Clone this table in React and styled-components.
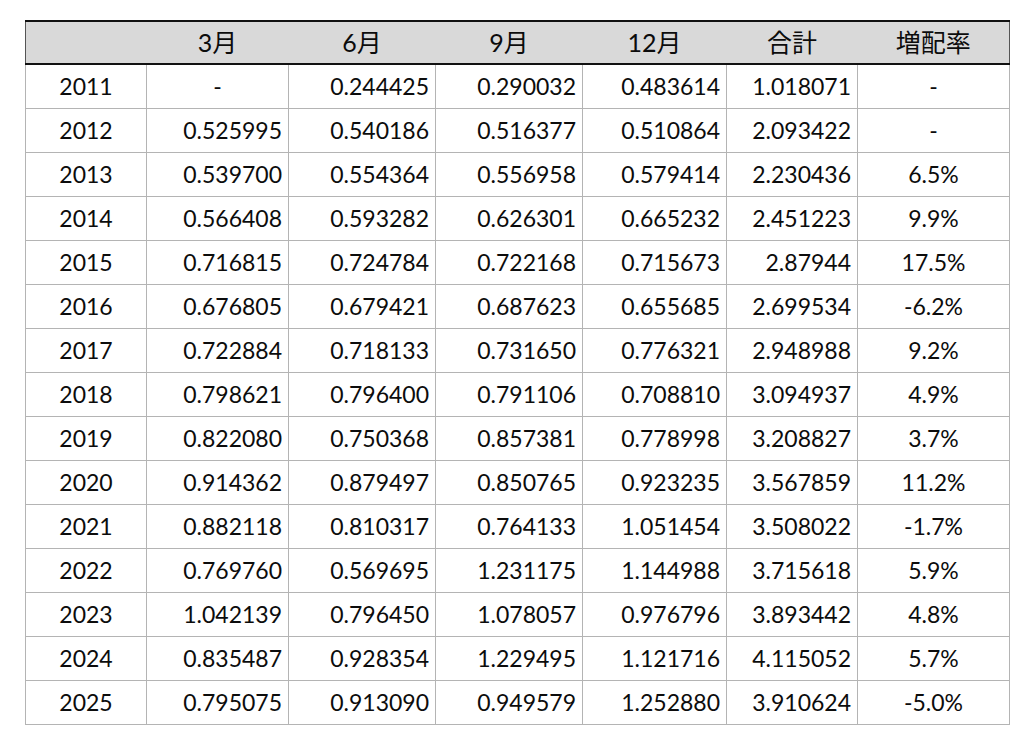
import React from 'react';
import styled, { createGlobalStyle } from 'styled-components';

const GlobalStyle = createGlobalStyle`
  html, body { margin: 0; padding: 0; background: #fff; }
  body { font-family: Lato, "Noto Sans CJK JP", sans-serif; color: #0c0c0c; }
`;

const COLUMNS = [
  { label: '', width: 121 },
  { label: '3月', width: 142 },
  { label: '6月', width: 147 },
  { label: '9月', width: 147 },
  { label: '12月', width: 144 },
  { label: '合計', width: 131 },
  { label: '増配率', width: 152 },
];

const ROWS = [
  ['2011', '-', '0.244425', '0.290032', '0.483614', '1.018071', '-'],
  ['2012', '0.525995', '0.540186', '0.516377', '0.510864', '2.093422', '-'],
  ['2013', '0.539700', '0.554364', '0.556958', '0.579414', '2.230436', '6.5%'],
  ['2014', '0.566408', '0.593282', '0.626301', '0.665232', '2.451223', '9.9%'],
  ['2015', '0.716815', '0.724784', '0.722168', '0.715673', '2.87944', '17.5%'],
  ['2016', '0.676805', '0.679421', '0.687623', '0.655685', '2.699534', '-6.2%'],
  ['2017', '0.722884', '0.718133', '0.731650', '0.776321', '2.948988', '9.2%'],
  ['2018', '0.798621', '0.796400', '0.791106', '0.708810', '3.094937', '4.9%'],
  ['2019', '0.822080', '0.750368', '0.857381', '0.778998', '3.208827', '3.7%'],
  ['2020', '0.914362', '0.879497', '0.850765', '0.923235', '3.567859', '11.2%'],
  ['2021', '0.882118', '0.810317', '0.764133', '1.051454', '3.508022', '-1.7%'],
  ['2022', '0.769760', '0.569695', '1.231175', '1.144988', '3.715618', '5.9%'],
  ['2023', '1.042139', '0.796450', '1.078057', '0.976796', '3.893442', '4.8%'],
  ['2024', '0.835487', '0.928354', '1.229495', '1.121716', '4.115052', '5.7%'],
  ['2025', '0.795075', '0.913090', '0.949579', '1.252880', '3.910624', '-5.0%'],
];

const Page = styled.div`
  padding: 20px 0 0 25px;
`;

const Table = styled.table`
  border-collapse: collapse;
  table-layout: fixed;
  width: 984px;
  font-size: 23px;
  line-height: 1;
`;

const HeadCell = styled.th`
  height: 41px;
  padding: 0;
  background: #d9d9d9;
  border-top: 2px solid #111;
  border-bottom: 2px solid #111;
  font-size: 25px;
  font-weight: 400;
  text-align: center;
  &:first-child { border-left: 1px solid #555; }
  &:last-child { border-right: 1px solid #555; }
`;

const Cell = styled.td`
  height: 43px;
  padding: 0 6px 0 0;
  border: 1px solid #b4b4b4;
  text-align: ${p => (p.$align === 'right' ? 'right' : 'center')};
  padding-left: ${p => (p.$align === 'right' ? '0' : '6px')};
  white-space: nowrap;
`;

function alignFor(colIndex, value) {
  if (colIndex === 0 || colIndex === 6) return 'center';
  if (value === '-') return 'center';
  return 'right';
}

export default function App() {
  return (
    <Page>
      <GlobalStyle />
      <Table>
        <colgroup>
          {COLUMNS.map((c, i) => <col key={i} style={{ width: c.width }} />)}
        </colgroup>
        <thead>
          <tr>
            {COLUMNS.map((c, i) => <HeadCell key={i}>{c.label}</HeadCell>)}
          </tr>
        </thead>
        <tbody>
          {ROWS.map(row => (
            <tr key={row[0]}>
              {row.map((v, i) => (
                <Cell key={i} $align={alignFor(i, v)}>{v}</Cell>
              ))}
            </tr>
          ))}
        </tbody>
      </Table>
    </Page>
  );
}
